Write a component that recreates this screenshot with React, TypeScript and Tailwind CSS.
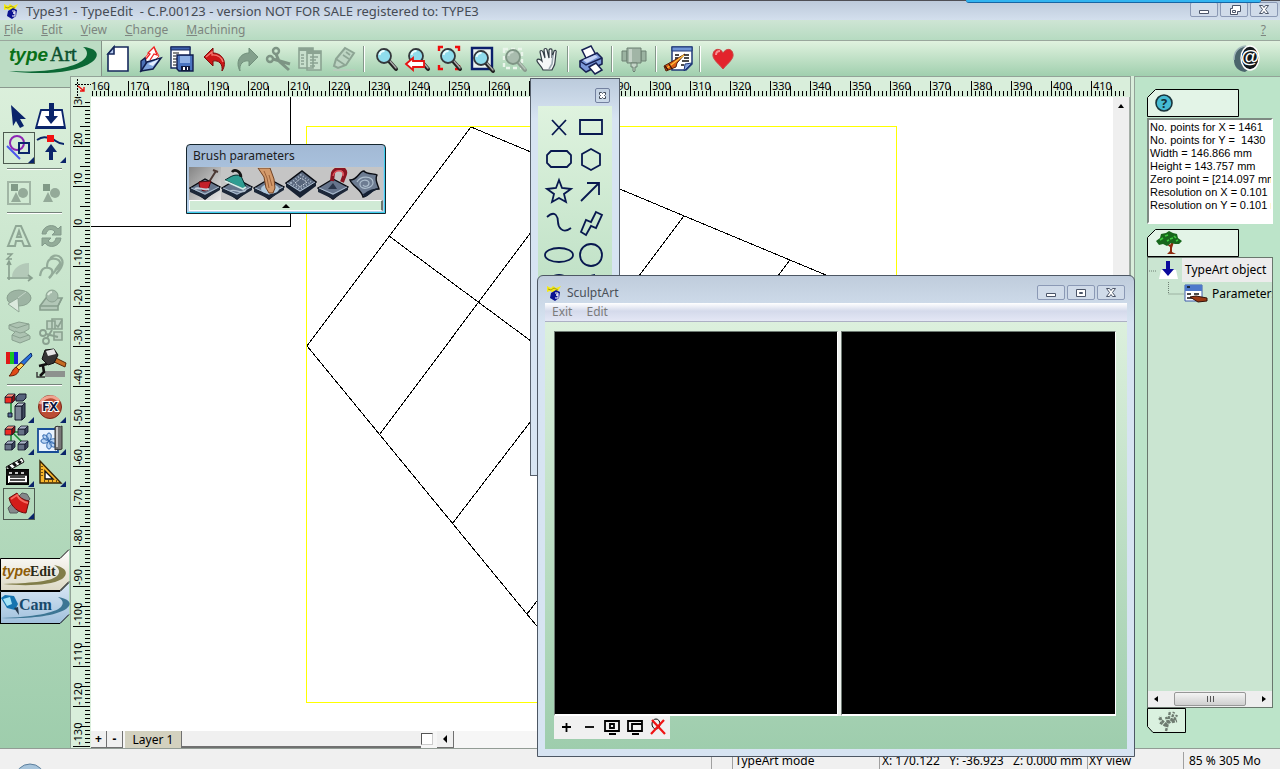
import React, { useState } from 'react';

// Types
interface IconProps {
  children: React.ReactNode;
  className?: string;
}

interface ToolProps {
  label: string;
  icon: React.ReactNode;
  active?: boolean;
  more?: boolean;
}

// Constants
const UNIT = 4.012; // pixels per millimetre on the rulers

const INFO_LINES = [
  'No. points for X = 1461',
  'No. points for Y =  1430',
  'Width = 146.866 mm',
  'Height = 143.757 mm',
  'Zero point = [214.097 mm',
  'Resolution on X = 0.101 mm',
  'Resolution on Y = 0.101 mm'
];

const MENUS = ['File', 'Edit', 'View', 'Change', 'Machining'];

const Icon: React.FC<IconProps> = ({ children, className = 'h-8 w-8' }) => (
  <svg viewBox="0 0 32 32" className={`block shrink-0 ${className}`} fill="none" aria-hidden="true">
    {children}
  </svg>
);

const Magnifier = ({ gray = false }: { gray?: boolean }) => (
  <>
    <path d="M19 18l7 8" stroke={gray ? '#8a9a8e' : '#222'} strokeWidth="4" strokeLinecap="round" />
    <path d="M20 18l6 7" stroke={gray ? '#b5c4b8' : '#aaa'} strokeWidth="1.5" strokeLinecap="round" />
    <circle cx="14" cy="13" r="7" fill={gray ? '#a9bcae' : '#8fdcec'} stroke={gray ? '#7e9484' : '#34383c'} strokeWidth="1.8" />
    <path d="M9.5 12a5 5 0 0 1 5-4" stroke={gray ? '#cddbd0' : '#e9fdff'} strokeWidth="2" />
  </>
);

// Toolbar icons
const NewIcon = () => (
  <Icon>
    <path d="M12 4h14v24H6V11z" fill="#fff" stroke="#16295c" strokeWidth="1.6" />
    <path d="M12 4v7H6z" fill="#b8cdf0" stroke="#16295c" strokeWidth="1.6" />
  </Icon>
);

const OpenIcon = () => (
  <Icon>
    <path d="M9 17L20 4l5 9-10 11z" fill="#fff" stroke="#e33" strokeWidth="1" />
    <path d="M12 16l4-5-2-1 6-6 3 8-3-1-4 6" fill="#fff" stroke="#e22" strokeWidth="1.3" />
    <path d="M7 28V18l4-3 2 7z" fill="#4a6fb5" stroke="#101c4c" strokeWidth="1.4" />
    <path d="M7 28l6-9 14-4-8 11z" fill="#7ea3dd" stroke="#101c4c" strokeWidth="1.5" />
    <path d="M14 21l11-5-6 7z" fill="#e4eeff" />
  </Icon>
);

const SaveIcon = () => (
  <Icon>
    <path d="M5 4h19v21H5z" fill="#fff" stroke="#16295c" strokeWidth="1.4" />
    <path d="M5 4h19v3H5z" fill="#3e62ae" stroke="#16295c" />
    <path d="M7 10h6M7 13h3M7 16h4M7 19h3M7 22h4" stroke="#111" />
    <path d="M11 12h16v16H13l-2-2z" fill="#4a74c0" stroke="#101c4c" strokeWidth="1.4" />
    <path d="M14 13h10v7H14z" fill="#8fb0e4" />
    <path d="M15 23h9v5h-9z" fill="#111a3c" />
    <path d="M17 24h2v3h-2zM21 24h1v3h-1z" fill="#fff" />
  </Icon>
);

const UndoIcon = () => (
  <Icon>
    <path d="M6 14l9-9v5c9 0 15 9 9 18 1-7-3-11-9-10v5z" fill="#cc1717" stroke="#7d0b0b" />
    <path d="M8 14l6-5v3c6-.5 10 3 11 7" stroke="#f47b70" strokeWidth="1.3" />
  </Icon>
);

const RedoIcon = () => (
  <Icon>
    <path d="M28 14l-9-9v5c-9 0-14 9-9 18-1-7 3-11 9-10v5z" fill="#83a08c" stroke="#71907b" />
  </Icon>
);

const CutIcon = () => (
  <Icon>
    <circle cx="14" cy="8" r="3" stroke="#7d9484" strokeWidth="2.4" />
    <circle cx="8" cy="16" r="3" stroke="#7d9484" strokeWidth="2.4" />
    <path d="M14 11l3 7 10 9M11 16l17 5" stroke="#7d9484" strokeWidth="3" />
  </Icon>
);

const CopyIcon = () => (
  <Icon>
    <path d="M5 5h14v20H5zM13 8h14v19H13z" fill="#c8dfcd" stroke="#8ba392" strokeWidth="1.6" />
    <path d="M5 5h14v3H5zM13 8h14v3H13z" fill="#8ba392" />
    <path d="M7 12h3M7 15h3M7 18h3M7 21h3M16 14h8M16 17h6M16 20h8M16 23h5" stroke="#8ba392" strokeWidth="1.4" />
  </Icon>
);

const EraseIcon = () => (
  <Icon>
    <path d="M10 16L19 5l9 5-8 12-8 3-4-2z" fill="#bdd5c3" stroke="#8da594" strokeWidth="2" />
    <path d="M10 16l9 6M17 12l6 4M20 9l4 3" stroke="#8da594" strokeWidth="1.6" />
    <path d="M7 27h22" stroke="#b7cdbc" strokeWidth="2" />
  </Icon>
);

const ZoomIcon = () => <Icon><Magnifier /></Icon>;

const ZoomBackIcon = () => (
  <Icon>
    <Magnifier />
    <path d="M4 21l7-6v3h11v6H11v3z" fill="#fff" stroke="#e61212" strokeWidth="1.8" />
  </Icon>
);

const ZoomFitIcon = () => (
  <Icon>
    <path d="M5 8V4h4M21 4h4v4M5 22v4h4M25 22v4h-4" stroke="#f00c0c" strokeWidth="2.4" />
    <Magnifier />
  </Icon>
);

const ZoomBoxIcon = () => (
  <Icon>
    <path d="M6 5h20v21H6z" fill="#e9f2ee" stroke="#0b1f6b" strokeWidth="2.4" />
    <g transform="translate(1 2)"><Magnifier /></g>
  </Icon>
);

const ZoomSelIcon = () => (
  <Icon>
    <path d="M6 6h18v19H6z" stroke="#eaf5eb" strokeWidth="2.4" strokeDasharray="4 3" />
    <g transform="translate(1 1)"><Magnifier gray /></g>
  </Icon>
);

const HandIcon = () => (
  <Icon>
    <g transform="translate(2 0)">
      <path d="M11 27c-2-5-7-8-6-10s4 0 5 1L8 9c0-2 2-2 3 0l2 6-1-8c0-2 3-2 3 0l2 8V7c1-2 3-1 3 0v8l2-7c1-1 3-1 2 2l-1 9c0 4-2 5-3 8z" fill="#f5f8f8" stroke="#333d46" strokeWidth="1.2" />
      <path d="M21 12l-1 9-3 5" stroke="#9daab2" strokeWidth="1.6" />
    </g>
  </Icon>
);

const PrintIcon = () => (
  <Icon>
    <path d="M8 7l9-4 5 9-9 5z" fill="#fff" stroke="#172153" strokeWidth="1.5" />
    <path d="M6 18l17-8 5 5v6l-16 8-6-5z" fill="#7a97d8" stroke="#172153" strokeWidth="1.6" />
    <path d="M6 18l6 4 16-7" stroke="#172153" strokeWidth="1.4" />
    <path d="M9 17l12-5 3 2-11 6z" fill="#c6d5f6" />
    <path d="M15 24l7-4 6 7-7 4z" fill="#fff" stroke="#172153" strokeWidth="1.5" />
  </Icon>
);

const SpindleIcon = () => (
  <Icon>
    <path d="M4 8h5v10H4zM23 8h5v10h-5z" fill="#9bb3a1" stroke="#6c8072" />
    <path d="M9 5h14v15H9z" fill="#a1b5a6" stroke="#6c8072" />
    <path d="M11 6h3v13h-3z" fill="#c5d3c8" />
    <path d="M13 20h6v4h-2v4l-1 1-1-1v-4h-2z" fill="#c4d5c8" stroke="#6c8072" />
  </Icon>
);

const ReportIcon = () => (
  <Icon>
    <path d="M10 4h20v17l-6 6H10z" fill="#fff" stroke="#213978" strokeWidth="1.5" />
    <path d="M10 4h20v4H10z" fill="#6f94d6" stroke="#213978" />
    <path d="M13 12h4M13 15h3M22 12h5M22 15h5M20 18h7M19 22h3" stroke="#111" strokeWidth="1.3" />
    <path d="M30 20l-7 1-1 7z" fill="#88a6dd" stroke="#213978" />
    <path d="M23 11L11 18l-9 5 2 5 10-4 1-4z" fill="#dc5c13" stroke="#50200b" />
    <path d="M22 12l-9 7-8 6" stroke="#ffc33f" strokeWidth="1.2" />
    <path d="M7 21l3 5M3 23l3 4" stroke="#3d1408" strokeWidth="1.4" />
  </Icon>
);

const HeartIcon = () => (
  <Icon>
    <path d="M17 26C12 20 6 16 7 11c1-6 8-6 10-1 3-5 9-5 10 1 1 5-5 9-10 15z" fill="#e3242c" stroke="#c44" />
    <path d="M10 12c0-3 2-4 4-4" stroke="#f79294" strokeWidth="2" />
  </Icon>
);

// Drawing tools
const PointerIcon = () => (
  <Icon><path d="M8 5l15 14-6 0 4 7-4 2-4-7-3 5z" fill="#0a246a" /></Icon>
);

const PressIcon = () => (
  <Icon>
    <path d="M6 10h21l3 18H1z" fill="#fff" stroke="#0a246a" strokeWidth="1.8" />
    <path d="M1 27h29" stroke="#0a246a" strokeWidth="2" />
    <path d="M14 3h5v13h4l-7 8-6-8h4z" fill="#0a246a" />
  </Icon>
);

const ShapesIcon = () => (
  <Icon>
    <circle cx="14" cy="11" r="7" stroke="#8d25b4" strokeWidth="2" />
    <path d="M16 11h10v10H16z" stroke="#0a246a" strokeWidth="2" />
    <path d="M4 14l13 13" stroke="#4a55ee" strokeWidth="2" />
  </Icon>
);

const NodeIcon = () => (
  <Icon>
    <path d="M2 8c7-5 11-2 15-1s5 5 12 5" stroke="#0a246a" strokeWidth="2" />
    <path d="M12 3h7v7h-7z" fill="#f31212" />
    <path d="M16 12l6 8h-4v8h-4v-8h-4z" fill="#0a246a" />
  </Icon>
);

const GroupIcon = ({ framed = false }: { framed?: boolean }) => (
  <Icon>
    {framed && <path d="M5 6h22v22H5z" stroke="#a1b6a5" strokeWidth="2" />}
    <path d="M8 8h7v7H8z" fill="#819a87" />
    <circle cx="20" cy="17" r="5" fill="#94aa99" />
    <path d="M13 16l5 10H8z" fill="#94aa99" />
  </Icon>
);

const LetterIcon = () => (
  <Icon>
    <path d="M5 26l8-20h5l9 20h-6l-2-5h-6l-1 5zM14 17h4l-2-6z" stroke="#8fa795" strokeWidth="2" />
  </Icon>
);

const CycleIcon = () => (
  <Icon>
    <path d="M7 14c1-9 12-11 16-5l3-3v9h-9l3-3c-3-4-8-3-9 2z" fill="#93ac99" stroke="#82998a" />
    <path d="M26 18c-1 9-12 11-16 5l-3 3v-8h9l-3 3c3 3 7 2 8-3z" fill="#93ac99" stroke="#82998a" />
  </Icon>
);

const ProfileIcon = () => (
  <Icon>
    <path d="M9 25c0-8 8-14 17-14v14z" fill="#b3c9b8" />
    <path d="M6 28V10M4 13l2-4 2 4M4 26h24M25 23l4 3-4 3" stroke="#889f8e" strokeWidth="1.6" />
    <path d="M4 2h5L4 7h5" stroke="#889f8e" strokeWidth="1.4" />
  </Icon>
);

const TubeIcon = () => (
  <Icon>
    <path d="M5 24c1-7 4-9 9-8s4 7 0 10M12 15c0-8 4-9 9-8s6 7 0 11M15 8c1-5 8-6 11-2s1 10-5 16" stroke="#93ab99" strokeWidth="2.2" />
    <path d="M14 26l7-8M20 18l6-8" stroke="#93ab99" strokeWidth="2" />
  </Icon>
);

const RevolveIcon = () => (
  <Icon>
    <ellipse cx="16" cy="14" rx="12" ry="8" fill="#9db4a3" stroke="#8aa190" />
    <path d="M15 14l-10 6 11 8z" fill="#dbe9dd" stroke="#92a998" />
    <path d="M15 14l8-6" stroke="#c4d5c8" />
  </Icon>
);

const EmbossIcon = () => (
  <Icon>
    <path d="M5 22l6-8h16l-4 8v4H5z" fill="#b2c7b7" stroke="#879e8d" strokeWidth="1.6" />
    <path d="M5 22h18l4-8" stroke="#879e8d" strokeWidth="1.4" />
    <circle cx="17" cy="12" r="6" fill="#a6bcac" stroke="#8ba291" />
    <path d="M13 11c1-2 2-3 4-3" stroke="#dcebdd" strokeWidth="2" />
  </Icon>
);

const LoftIcon = () => (
  <Icon>
    <path d="M6 9l10-3 10 2v5l-5 3 6 4v3l-10 4-8-3v-5l3-3-6-3z" fill="#adc3b2" stroke="#8aa190" />
    <path d="M6 9l8 3 12-4M9 19l8 3 9-3M12 15l5 2 4-1" stroke="#8aa190" />
  </Icon>
);

const TrimIcon = () => (
  <Icon>
    <path d="M12 5h8v8h-8zM17 3h10v10H17zM19 16h8v8h-8z" fill="#bed4c3" stroke="#8aa190" strokeWidth="1.6" />
    <path d="M21 9l2 2 4-7" stroke="#8aa190" strokeWidth="1.6" />
    <circle cx="8" cy="17" r="3" stroke="#8aa190" strokeWidth="1.8" />
    <circle cx="11" cy="25" r="3" stroke="#8aa190" strokeWidth="1.8" />
    <path d="M11 18l12 3M12 22l5-8" stroke="#8aa190" strokeWidth="2" />
  </Icon>
);

const PaintIcon = () => (
  <Icon>
    <path d="M3 4h4v12H3z" fill="#e01818" />
    <path d="M7 4h4v12H7z" fill="#19c425" />
    <path d="M11 4h4v12h-4z" fill="#1a22d8" />
    <path d="M28 5l1 3-12 13-3-3z" fill="#2871dc" stroke="#0b296b" />
    <path d="M18 15l3 2-5 5-3-3z" fill="#ffd255" stroke="#6d3909" />
    <path d="M13 19l3 3c-1 4-4 6-10 6 3-2 3-7 7-9z" fill="#e04a16" stroke="#6d1f09" />
  </Icon>
);

const HammerIcon = () => (
  <Icon>
    <path d="M10 23h20v6H10z" fill="#8d928e" />
    <path d="M2 24v5h8" stroke="#333" strokeWidth="1.4" />
    <path d="M19 9l12 6-1 4-13-6z" fill="#c56b22" stroke="#5b2809" />
    <path d="M10 2l9-1 4 6-4 8-6 2-6-6z" fill="#343434" stroke="#111" />
    <path d="M11 3l8-2 2 5-8 2z" fill="#e6e6e6" />
    <path d="M4 18l8-2M8 18l1 6-4 4" stroke="#111" strokeWidth="2.600" />
  </Icon>
);

const Cube = ({ x, y, red = false }: { x: number; y: number; red?: boolean }) => (
  <g transform={`translate(${x} ${y})`} stroke="#14182c" strokeWidth="0.8">
    <path d="M0 3h7v6H0z" fill={red ? '#ee2a22' : '#667286'} />
    <path d="M0 3l3-3h7L7 3z" fill={red ? '#ff8a78' : '#aab5c8'} />
    <path d="M7 3l3-3v6L7 9z" fill={red ? '#8e1010' : '#39435b'} />
  </g>
);

const SceneIcon = () => (
  <Icon>
    <path d="M8 9v13M10 7h6" stroke="#1a8c30" strokeWidth="1.5" />
    <Cube x={2} y={2} red />
    <path d="M13 5l3-3h7v4l-3 3h-7z" fill="#56637c" stroke="#14182c" />
    <path d="M12 14h7v14h-7z" fill="#7a8595" stroke="#14182c" />
    <path d="M12 14l3-3h7l-3 3z" fill="#c0c9d5" stroke="#14182c" />
    <path d="M19 14l3-3v14l-3 3z" fill="#414b5e" stroke="#14182c" />
    <path d="M5 21h4v4H5z" fill="#526a97" stroke="#14182c" />
  </Icon>
);

const FxIcon = () => (
  <Icon>
    <circle cx="15" cy="15" r="11.5" fill="#bb4d35" stroke="#7c2415" />
    <path d="M5 12a11 11 0 0 1 19-3" stroke="#f0a591" strokeWidth="3" />
    <text x="15" y="19" textAnchor="middle" className="font-['Noto_Sans'] text-[13px] font-bold" fill="#0b1440" stroke="#fff" strokeWidth="2" paintOrder="stroke">FX</text>
  </Icon>
);

const CubesIcon = () => (
  <Icon>
    <path d="M8 9v10M10 9l10 10M10 8h9" stroke="#1a8c30" strokeWidth="1.5" />
    <Cube x={2} y={2} red />
    <Cube x={15} y={2} />
    <Cube x={2} y={17} />
    <Cube x={15} y={17} />
  </Icon>
);

const PatternIcon = () => (
  <Icon>
    <path d="M3 5h20v23H3z" fill="#e9f3ff" stroke="#174b96" strokeWidth="1.8" />
    <path d="M14 9c-3 0-3 6 0 8 3-2 3-8 0-8zM14 25c-3 0-3-6 0-8 3 2 3 8 0 8zM6 17c0-3 6-3 8 0-2 3-8 3-8 0zM22 17c0-3-6-3-8 0 2 3 8 3 8 0zM8 11c-1 3 3 6 6 6 0-3-3-7-6-6zM20 23c1-3-3-6-6-6 0 3 3 7 6 6z" fill="#b9d5f6" stroke="#2f66ad" />
    <path d="M20 3c3-2 5 1 7-1v23c-3 2-4-1-7 1z" fill="#777" stroke="#333" />
    <path d="M22 3v20" stroke="#ddd" strokeWidth="1.6" />
  </Icon>
);

const ClapperIcon = () => (
  <Icon>
    <path d="M3 11L19 2l2 4L5 15z" fill="#fff" stroke="#111" />
    <path d="M5 10l3 3M10 7l3 3M15 5l3 2" stroke="#111" strokeWidth="3" />
    <path d="M4 14h21v14H4z" fill="#fff" stroke="#000" strokeWidth="2" />
    <path d="M4 15h21v4H4zM7 21h15M7 24h15M6 27h18" fill="#111" stroke="#111" strokeWidth="1.6" />
    <path d="M6 17h3M12 17h3M18 17h3" stroke="#fff" strokeWidth="1.6" />
  </Icon>
);

const RulerIcon = () => (
  <Icon>
    <path d="M5 5l21 22H5z" fill="#f8b62c" stroke="#3a2505" strokeWidth="1.4" />
    <path d="M10 15l8 8h-8z" fill="#fff" stroke="#111" strokeWidth="1.4" />
    <path d="M7 10v1M7 13v1M7 16v1M7 19v1M9 25h1M13 25h1M17 25h1M21 25h1" stroke="#442a05" strokeWidth="1.4" />
  </Icon>
);

const EraserIcon = () => (
  <Icon>
    <path d="M5 20L19 5l5 1 3 5-13 14-7 0z" fill="#84898b" stroke="#565b5c" />
    <path d="M6 10l8-5c2 4 6 7 12 8l-3 12c-7 0-15-6-17-15z" fill="#d31c19" stroke="#690c0b" />
    <path d="M8 11l6-4c2 4 6 7 11 8" stroke="#f46a60" strokeWidth="1.8" />
  </Icon>
);

// Brush icons share a stone slab
const Slab = ({ children }: { children?: React.ReactNode }) => (
  <>
    <path d="M1 20l15-9 15 8-15 12z" fill="#66758c" stroke="#080b12" strokeWidth="1.4" />
    <path d="M1 20l15 7 15-8v3L16 31 1 24z" fill="#1d2839" />
    <path d="M2 20l14 6 14-7" stroke="#adbfd1" />
    {children}
  </>
);

const BRUSHES = [
  {
    label: 'Add material',
    art: <Slab><path d="M20 14l7-11M24 2l5 2" stroke="#4b3934" strokeWidth="2" /><path d="M10 14l12-1-3 9c-4 2-9 1-9-8z" fill="#c4202a" stroke="#4f090e" /><path d="M6 21c3-3 8 2 14 0" stroke="#c3cedb" strokeWidth="2" /></Slab>
  },
  {
    label: 'Smooth',
    art: <Slab><path d="M4 12c4-2 9-7 16-4l5 11-3 2z" fill="#2f9d92" stroke="#082c2e" /><path d="M4 13l18 8 3-2" stroke="#d5eee9" strokeWidth="1.6" /><path d="M11 4c3-4 9 0 9 5" stroke="#151515" strokeWidth="2.6" /><path d="M9 23c5-3 12 4 16-1" stroke="#b1bfce" strokeWidth="1.4" /></Slab>
  },
  {
    label: 'Stamp',
    art: <Slab><ellipse cx="17" cy="21" rx="9" ry="5" fill="#b1c9dc" /><path d="M5 0h12l4 11 1 9-2 5h-4l-3-5-2-11z" fill="#d39a6b" stroke="#704122" /><path d="M11 3l3 7 2 10M16 7l3 11" stroke="#9b6039" /></Slab>
  },
  {
    label: 'Texture',
    art: <><path d="M1 15L17 3l14 11-16 13z" fill="#59677d" stroke="#080b12" strokeWidth="1.5" /><path d="M1 15l14 9 16-10v4L15 30 1 19z" fill="#172233" /><path d="M6 15l10-8 10 7-11 7z" stroke="#a7b6c8" strokeWidth="2" strokeDasharray="1 2" /><path d="M10 15l6-5 6 4-7 5z" stroke="#d1dbe5" strokeDasharray="2 1" /><path d="M2 15l13 8 15-9" stroke="#adbfd1" /></>
  },
  {
    label: 'Attract',
    art: <Slab><path d="M15 13l1-8c2-6 14-6 12 1l-3 8" stroke="#8b1522" strokeWidth="4" /><path d="M16 8c1-7 12-7 10 0" stroke="#df515a" strokeWidth="1.5" /><path d="M11 21l5-6 4 6z" fill="#29364a" /></Slab>
  },
  {
    label: 'Distort',
    art: <><path d="M1 12c8 0 9-9 14-9 3 4 11 2 13 4-3 5 2 12 2 14-8-1-11 8-16 8C13 22 3 18 1 12z" fill="#6d7c92" stroke="#080b12" strokeWidth="1.4" /><path d="M8 14c4-7 15-6 16 0s-12 9-13 3 9-6 9-2-5 4-6 2" stroke="#aebfce" strokeWidth="1.2" /><path d="M14 26c4-1 6-6 16-5-7 1-10 8-15 8" fill="#142033" /></>
  }
];

const SHAPES = [
  { label: 'Point', art: <path d="M9 9l14 15M23 9L9 24" /> },
  { label: 'Rectangle', art: <path d="M5 9h22v14H5z" /> },
  { label: 'Rounded rectangle', art: <path d="M8 8h16l4 4v8l-4 4H8l-4-4v-8z" /> },
  { label: 'Polygon', art: <path d="M16 6l9 5v11l-9 5-9-5V11z" /> },
  { label: 'Star', art: <path d="M16 5l3 8 9 1-7 5 2 8-7-4-7 4 2-8-7-5 9-1z" /> },
  { label: 'Line', art: <path d="M6 26L23 9M12 8h12v12" /> },
  { label: 'Curve', art: <path d="M4 10c9-8 11 1 11 5s4 13 13 6" /> },
  { label: 'Path', art: <path d="M21 5l6 3-6 13-5-2-5 9-5-3 5-12 5 2z" /> },
  { label: 'Ellipse', art: <ellipse cx="16" cy="16" rx="14" ry="7" /> },
  { label: 'Circle', art: <circle cx="16" cy="16" r="11" /> },
  { label: 'Ring', art: <circle cx="16" cy="15" r="11" /> },
  { label: 'Arc', art: <path d="M6 24c0-12 5-19 14-20" /> }
];

const TOOLBAR: ToolProps[][] = [
  [
    { label: 'New', icon: <NewIcon /> },
    { label: 'Open', icon: <OpenIcon /> },
    { label: 'Save', icon: <SaveIcon /> },
    { label: 'Undo', icon: <UndoIcon /> },
    { label: 'Redo', icon: <RedoIcon /> },
    { label: 'Cut', icon: <CutIcon /> },
    { label: 'Copy', icon: <CopyIcon /> },
    { label: 'Erase', icon: <EraseIcon /> }
  ],
  [
    { label: 'Zoom', icon: <ZoomIcon /> },
    { label: 'Previous zoom', icon: <ZoomBackIcon /> },
    { label: 'Zoom all', icon: <ZoomFitIcon /> },
    { label: 'Zoom page', icon: <ZoomBoxIcon /> },
    { label: 'Zoom selection', icon: <ZoomSelIcon /> },
    { label: 'Pan', icon: <HandIcon /> }
  ],
  [{ label: 'Print', icon: <PrintIcon /> }],
  [{ label: 'Machine', icon: <SpindleIcon /> }],
  [{ label: 'Report', icon: <ReportIcon /> }],
  [{ label: 'Favourite', icon: <HeartIcon /> }]
];

const SIDE_TOOLS: ToolProps[][] = [
  [
    { label: 'Select', icon: <PointerIcon /> },
    { label: 'Press', icon: <PressIcon /> },
    { label: 'Shapes', icon: <ShapesIcon />, active: true, more: true },
    { label: 'Edit points', icon: <NodeIcon />, more: true }
  ],
  [
    { label: 'Group', icon: <GroupIcon framed /> },
    { label: 'Ungroup', icon: <GroupIcon /> }
  ],
  [
    { label: 'Text', icon: <LetterIcon /> },
    { label: 'Convert', icon: <CycleIcon /> },
    { label: 'Profile', icon: <ProfileIcon /> },
    { label: 'Tube', icon: <TubeIcon /> },
    { label: 'Revolve', icon: <RevolveIcon /> },
    { label: 'Emboss', icon: <EmbossIcon /> },
    { label: 'Loft', icon: <LoftIcon /> },
    { label: 'Trim', icon: <TrimIcon /> },
    { label: 'Paint', icon: <PaintIcon /> },
    { label: 'Hammer', icon: <HammerIcon /> }
  ],
  [
    { label: 'Scene', icon: <SceneIcon />, more: true },
    { label: 'Effects', icon: <FxIcon />, more: true },
    { label: 'Objects', icon: <CubesIcon />, more: true },
    { label: 'Pattern', icon: <PatternIcon />, more: true },
    { label: 'Animation', icon: <ClapperIcon />, more: true },
    { label: 'Measure', icon: <RulerIcon />, more: true },
    { label: 'Eraser', icon: <EraserIcon />, active: true, more: true }
  ]
];

const SideTool: React.FC<ToolProps> = ({ label, icon, active = false, more = false }) => (
  <button aria-label={label} title={label} className={`relative h-8 w-8 ${active ? 'outline outline-1 -outline-offset-1 outline-[#4d5a50]' : ''}`}>
    {icon}
    {more && (
      <svg viewBox="0 0 6 6" className="absolute right-px bottom-px h-[6px] w-[6px]" aria-hidden="true">
        <path d="M6 0v6H0z" fill="#0a246a" />
      </svg>
    )}
  </button>
);

// Window caption buttons
const CAPTION_ART = {
  min: <path d="M8.5 7.5h9v3h-9z" />,
  max: <path d="M8.5 3.5h9v7h-9zM11.5 6.5h3v1h-3z" />,
  restore: <path d="M11.5 2.5h8v6h-3v3h-7v-6h2zM11.5 7.5h3v2h-3z" />,
  close: <path d="M8.5 2.5h3l1.5 2 1.5-2h3l-3 4 3 4h-3l-1.5-2-1.5 2h-3l3-4z" />
};

const CaptionButton = ({ kind, label }: { kind: keyof typeof CAPTION_ART; label: string }) => (
  <button aria-label={label} className="h-[15px] w-7 rounded-[2px] border border-[#8b99b5] bg-[#d0dbe9]">
    <svg viewBox="0 0 26 13" className="h-[13px] w-[26px]" fill="#fff" stroke="#4b5568" aria-hidden="true">
      {CAPTION_ART[kind]}
    </svg>
  </button>
);

const AppBadge = () => (
  <svg viewBox="0 0 16 16" className="h-4 w-4 shrink-0" aria-hidden="true">
    <path d="M0 1l4 2 2-2 3 2 5-2-3 5-4 2-4-2-3 1z" fill="#f4ea18" />
    <path d="M1 4l3 1 3-2 4 2" fill="none" stroke="#6e6a10" strokeWidth="0.600" />
    <path d="M4 8l5-3 4 2-1 6-4 3-5-3z" fill="#0c1290" />
    <path d="M8 8h3v2H9h2v3H8" fill="none" stroke="#fff" />
  </svg>
);

// Rulers
const TopRuler = () => {
  const ticks: number[] = [];
  for (let v = 161; v <= 418; v++) ticks.push(v);
  const px = (v: number) => Math.round(37 + (v - 170) * UNIT);

  return (
    <svg className="block h-full w-full" shapeRendering="crispEdges" aria-hidden="true">
      {ticks.map((v) => (
        <path key={v} d={`M${px(v)}.5 19V${v % 10 === 0 ? 4 : v % 5 === 0 ? 9 : 14}`} stroke="#000" />
      ))}
      {ticks.filter((v) => v % 10 === 0).map((v) => (
        <text key={v} x={px(v) + 2} y="13" className="font-['Noto_Sans'] text-[11px]">{v}</text>
      ))}
      <text x="0" y="13" className="font-['Noto_Sans'] text-[11px]">160</text>
    </svg>
  );
};

const LeftRuler = () => {
  const ticks: number[] = [];
  for (let v = 31; v >= -130; v--) ticks.push(v);
  const py = (v: number) => Math.round(129 - v * 4);

  return (
    <svg className="block h-full w-full" shapeRendering="crispEdges" aria-hidden="true">
      {ticks.map((v) => (
        <path key={v} d={`M17 ${py(v)}.5H${v % 10 === 0 ? 0 : v % 5 === 0 ? 7 : 12}`} stroke="#000" />
      ))}
      {ticks.filter((v) => v % 10 === 0).map((v) => (
        <text key={v} transform={`translate(9 ${py(v) - 1}) rotate(-90)`} className="font-['Noto_Sans'] text-[11px]">{v}</text>
      ))}
    </svg>
  );
};

const Drawing = () => (
  <svg className="absolute inset-0 h-full w-full" fill="none" stroke="#000" shapeRendering="crispEdges" aria-label="Drawing">
    <path d="M199.5 0V129.5H0" />
    <path d="M215.5 29.5h590v576h-590z" stroke="#ffff00" />
    <path d="M380 30L216 249l320 390M380 30l356 148.5 120 50" />
    <path d="M298 139l200 148M289 337L443 131M361 427l82-107M436 517l62-82" />
    <path d="M593 119l-60 80M699 163l-30 40" />
  </svg>
);

const BrandTab = ({ name }: { name: 'edit' | 'cam' }) => (
  <svg viewBox="0 0 70 42" className="block h-[42px] w-[70px]" aria-hidden="true">
    <defs>
      <linearGradient id={`tab-${name}`} x1="0" y1="0" x2="0" y2="1">
        <stop offset="0" stopColor={name === 'edit' ? '#fff' : '#dbe9f6'} />
        <stop offset="1" stopColor={name === 'edit' ? '#dcd8c4' : '#a0c0dc'} />
      </linearGradient>
    </defs>
    <path d="M0 9h60l9-9v33l-9 9H0z" fill={`url(#tab-${name})`} />
    <path d="M.5 42V9.5H60L69 .5M0 41.5h60l9-9" fill="none" stroke="#000" />
    {name === 'edit' ? (
      <>
        <path d="M54 16c11 2 16 8 8 14-12 7-39 7-59 5 25-1 47-2 54-8 4-4 2-8-3-11z" fill="#817d49" />
        <text x="2" y="27" className="font-['Liberation_Sans'] text-[14px] font-bold italic" fill="#8d5c08">type</text>
        <text x="30" y="27" className="font-['Liberation_Serif'] text-[14px] font-bold" fill="#292915">Edit</text>
      </>
    ) : (
      <>
        <path d="M58 15c12 2 15 7 8 12-12 8-43 10-65 9 32-1 54-5 60-11 3-4 2-7-3-10z" fill="#3d7694" />
        <path d="M1 16l4-3 9 1 4 8-3 6-8-2z" fill="#1674b0" />
        <path d="M3 17l7-2 2 7-5 2z" fill="#a5e3f7" />
        <path d="M14 26l4-1 1 8z" fill="#26394d" />
        <text x="19" y="28" className="font-['Liberation_Serif'] text-[16px] font-bold" fill="#17496c">Cam</text>
      </>
    )}
  </svg>
);

const PanelTab = ({ children }: { children: React.ReactNode }) => (
  <div className="relative h-7 w-[92px]">
    <svg viewBox="0 0 92 28" className="absolute inset-0 h-7 w-[92px]" aria-hidden="true">
      <path d="M8.5 .5h83v27H.5v-19z" fill="#e3f4e7" stroke="#000" />
    </svg>
    <div className="relative pl-2 pt-[5px]">{children}</div>
  </div>
);

const InfoPanel = () => (
  <aside className="ml-[3px] flex w-[146px] shrink-0 flex-col border-t border-l border-[#93a398] bg-[#bce4c9] pt-3 pr-[7px] pl-3">
    <PanelTab>
      <svg viewBox="0 0 18 18" className="h-[18px] w-[18px]" role="img" aria-label="Help">
        <circle cx="9" cy="9" r="8" fill="#46bbd3" stroke="#19343b" strokeWidth="1.6" />
        <text x="9" y="14" textAnchor="middle" className="font-['Noto_Sans'] text-[13px] font-bold" fill="#11313a">?</text>
      </svg>
    </PanelTab>
    <div className="mt-px h-[106px] overflow-hidden border-2 border-t-[#7d8a82] border-r-white border-b-white border-l-[#7d8a82] bg-white pt-px pl-px font-['Liberation_Sans',sans-serif] text-[11px] leading-[13px] whitespace-pre">
      {INFO_LINES.map((line) => (
        <p key={line}>{line}</p>
      ))}
    </div>
    <div className="mt-[5px]">
      <PanelTab>
        <svg viewBox="0 0 28 24" className="-mt-1 h-6 w-7" aria-hidden="true">
          <path d="M12 12l3 3 3-5 1 2-2 6v4l4 2h-9l3-3v-4l-5-4z" fill="#8d2a0d" />
          <path d="M1 11l4-3 1-4 5-1 3-2 4 2 4 1 1 4 4 3-3 3h-4l-4-1-4 3-4-2-4 1z" fill="#17671c" />
          <path d="M5 10l3-2M10 6l3-1M15 9l3-1M19 6l2 2M21 11l2-1M12 11l2-1" stroke="#3dcb3f" strokeWidth="1.6" />
        </svg>
      </PanelTab>
    </div>
    <div className="flex min-h-0 flex-1 flex-col border border-[#69776d] bg-[#cae5d1]">
      <ul className="flex-1 overflow-hidden text-[12px] leading-6 whitespace-nowrap">
        <li className="flex h-6 items-center">
          <svg viewBox="0 0 34 24" className="h-6 w-[34px] shrink-0" aria-hidden="true">
            <path d="M1 13h8" stroke="#6f8074" strokeDasharray="1 1" />
            <path d="M13 12h15l2 9H11z" fill="#fff" />
            <path d="M18 3h4v8h4l-6 7-6-7h4z" fill="#0a0a9c" />
          </svg>
          <span className="h-full flex-1 bg-[#ececec] pl-[3px]">TypeArt object</span>
        </li>
        <li className="flex h-6 items-center">
          <svg viewBox="0 0 60 24" className="h-6 w-[60px] shrink-0" aria-hidden="true">
            <path d="M20.5 0v12H36" stroke="#6f8074" fill="none" strokeDasharray="1 1" />
            <path d="M37 3h17v16H37z" fill="#fff" stroke="#3a5baa" />
            <path d="M37 3h17v6H37z" fill="#4e79cb" />
            <path d="M39 5h3M39 12h4M46 12h5M39 16h12" stroke="#111" strokeWidth="1.4" />
            <path d="M42 15l6-1 11 2v3l-9 1z" fill="#9a3a15" stroke="#32130a" />
          </svg>
          <span className="pl-1">Parameters</span>
        </li>
      </ul>
      <div className="flex h-4 items-center justify-between bg-[#eee]">
        <button aria-label="Scroll left" className="flex h-4 w-4 items-center justify-center">
          <svg viewBox="0 0 4 8" className="h-2 w-1" aria-hidden="true"><path d="M4 1v6L0 4z" /></svg>
        </button>
        <div className="flex h-[14px] w-[72px] items-center justify-center gap-[2px] rounded-[2px] border border-[#979797] bg-linear-to-b from-[#f4f4f4] to-[#cfcfcf]">
          <i className="h-[6px] w-px bg-[#555]" />
          <i className="h-[6px] w-px bg-[#555]" />
          <i className="h-[6px] w-px bg-[#555]" />
        </div>
        <button aria-label="Scroll right" className="flex h-4 w-4 items-center justify-center">
          <svg viewBox="0 0 4 8" className="h-2 w-1" aria-hidden="true"><path d="M0 1v6l4-3z" /></svg>
        </button>
      </div>
    </div>
    <button aria-label="Layers tree" className="mb-[15px] h-[25px] w-[39px]">
      <svg viewBox="0 0 39 25" className="h-[25px] w-[39px]" aria-hidden="true">
        <path d="M.5 .5h38v24H6l-5.5-6z" fill="#daf1df" stroke="#000" />
        <path d="M19 23l2-8 8-4M21 15l-2-6M24 13l3-9M20 17l-8-7M21 15l2-12M14 12l-1-4M27 12l3-5M19 18l-7-4M25 14l5-1" stroke="#6e7b70" strokeWidth="2.4" strokeDasharray="3 1" fill="none" />
      </svg>
    </button>
  </aside>
);

const ShapePalette = () => (
  <section className="absolute top-[78px] left-[530px] flex h-[398px] w-[90px] flex-col border border-[#57606c] bg-linear-to-b from-[#bccbdc] via-[#d7e4f2] via-10% to-[#d7e4f2] px-[7px] pb-[7px]">
    <header className="flex h-[27px] items-center justify-end pt-[6px] pr-[2px]">
      <button aria-label="Close palette" className="h-[15px] w-[15px] rounded-[2px] border border-[#73819f]">
        <svg viewBox="0 0 13 13" className="h-[13px] w-[13px]" fill="#fff" stroke="#3f4857" aria-hidden="true">
          <path d="M3.5 3.5h2l1 1 1-1h2v2l-1 1 1 1v2h-2l-1-1-1 1h-2v-2l1-1-1-1z" />
        </svg>
      </button>
    </header>
    <div className="flex-1 overflow-hidden bg-linear-to-b from-[#dff3df] to-[#a0cfae] pt-[5px] pl-[5px]">
      <div className="grid w-16 grid-cols-2">
        {SHAPES.map((shape) => (
          <button key={shape.label} aria-label={shape.label} className="h-8 w-8">
            <Icon><g stroke="#08184f" strokeWidth="1.8">{shape.art}</g></Icon>
          </button>
        ))}
      </div>
    </div>
  </section>
);

const BrushWindow = () => (
  <section className="absolute top-[144px] left-[186px] w-[200px] rounded-t-[4px] border border-[#15262e] bg-linear-to-b from-[#a2b9d5] to-[#b6d0eb] px-[2px] pb-[2px] shadow-[inset_-1px_-1px_0_#3fd0ee]">
    <h2 className="h-[22px] pl-1 text-[12px] leading-[22px] text-[#1c1c1c]">Brush parameters</h2>
    <div className="flex h-[33px] bg-[#c5c5c5]">
      {BRUSHES.map((brush, index) => (
        <button key={brush.label} aria-label={brush.label} className={`h-[33px] w-8 ${index === 0 ? 'bg-linear-to-br from-[#858585] to-[#e8e8e8]' : ''}`}>
          <Icon>{brush.art}</Icon>
        </button>
      ))}
    </div>
    <div className="flex h-[11px] items-center justify-center border border-r-2 border-white border-r-[#6d776f] bg-[#d0ead5]">
      <svg viewBox="0 0 8 4" className="h-1 w-2" aria-hidden="true"><path d="M0 4l4-4 4 4z" /></svg>
    </div>
  </section>
);

const VIEW_TOOLS = [
  { label: 'Zoom in', art: <path d="M7 11h9M11.5 7v9" /> },
  { label: 'Zoom out', art: <path d="M7 11h9" /> },
  { label: 'Fit view', art: <path d="M4 5h14v10H4zM8 18h7M9 8h4v4H9z" /> },
  { label: 'Window view', art: <path d="M4 5h14v10H4zM8 18h7M8 15V8h10" /> }
];

const SculptWindow = () => (
  <section className="absolute top-[275px] left-[537px] flex h-[482px] w-[598px] flex-col rounded-t-[6px] border border-[#4d5764] bg-linear-to-b from-[#bfccdc] via-[#d7e4f2] via-10% to-[#d7e4f2] px-[7px] pb-[7px]">
    <header className="flex h-[27px] items-center gap-1 pt-[6px] pl-[2px]">
      <AppBadge />
      <h2 className="flex-1 text-[12px] text-[#4a5058]">SculptArt</h2>
      <div className="flex gap-[2px] pr-[2px]">
        <CaptionButton kind="min" label="Minimize SculptArt" />
        <CaptionButton kind="max" label="Maximize SculptArt" />
        <CaptionButton kind="close" label="Close SculptArt" />
      </div>
    </header>
    <nav className="flex h-[19px] items-center gap-[14px] border-b border-[#acb0c4] bg-linear-to-b from-white via-[#d4daeb] via-45% to-[#e4e7f5] pl-[7px] text-[12px] leading-[18px] text-[#7b7b7b]">
      <button>Exit</button>
      <button>Edit</button>
    </nav>
    <div className="flex flex-1 flex-col bg-linear-to-b from-[#dcf0dd] to-[#9ecdad] px-[9px] pt-[9px] pb-[10px]">
      <div className="mr-[2px] flex min-h-0 flex-1 gap-[3px] bg-[#eef2ee]">
        <div className="flex-[284] border-t border-r border-b-2 border-l border-t-[#6e7a73] border-r-white border-b-white border-l-[#6e7a73] bg-black" />
        <div className="flex-[275] border-t border-r border-b-2 border-l border-t-[#6e7a73] border-r-white border-b-white border-l-[#6e7a73] bg-black" />
      </div>
      <div className="flex h-[23px] w-[116px] bg-[#f0f0f0] pl-px">
        {VIEW_TOOLS.map((tool) => (
          <button key={tool.label} aria-label={tool.label} className="h-[23px] w-[23px]">
            <svg viewBox="0 0 23 23" className="h-[23px] w-[23px]" fill="none" stroke="#000" strokeWidth="1.8" aria-hidden="true">{tool.art}</svg>
          </button>
        ))}
        <button aria-label="Reset view" className="h-[23px] w-[23px]">
          <svg viewBox="0 0 23 23" className="h-[23px] w-[23px]" fill="none" aria-hidden="true">
            <ellipse cx="9" cy="8" rx="4" ry="5" stroke="#000" />
            <path d="M4 18L17 4M5 4l13 14" stroke="#f01414" strokeWidth="2.2" />
          </svg>
        </button>
      </div>
    </div>
  </section>
);

const Workspace = () => {
  const [visible, setVisible] = useState(false);

  return (
    <main className="flex min-w-0 flex-1 flex-col border-t border-r border-l border-[#93a398] bg-[#d9eedb] pl-[2px]">
      <div className="flex h-5 shrink-0">
        <svg viewBox="0 0 18 20" className="h-5 w-[18px] shrink-0" aria-hidden="true">
          <path d="M2 7.5h16M4.5 2v18" stroke="#000" strokeDasharray="2 1" />
          <path d="M5 9l6 5M11 10v4H7" stroke="#e11" fill="none" strokeWidth="1.4" />
        </svg>
        <div className="min-w-0 flex-1"><TopRuler /></div>
      </div>
      <div className="flex min-h-0 flex-1">
        <div className="w-[18px] shrink-0"><LeftRuler /></div>
        <div className="flex min-w-0 flex-1 flex-col">
          <div className="flex min-h-0 flex-1">
            <div className="relative min-w-0 flex-1 bg-white"><Drawing /></div>
            <div className="w-[17px] shrink-0 border-r border-[#a5aea7] bg-[#efefef]">
              <button aria-label="Scroll up" className="flex h-[18px] w-4 items-center justify-center">
                <svg viewBox="0 0 8 4" className="h-1 w-2" aria-hidden="true"><path d="M1 4l3-4 3 4z" /></svg>
              </button>
            </div>
          </div>
          <div className="flex h-[17px] shrink-0 items-stretch bg-[#f6f6f6] text-[12px] leading-[16px]">
            <button className="w-4 border-r border-b border-[#707070] bg-[#f0f0f0] font-bold">+</button>
            <button className="w-4 border-r border-b border-[#707070] bg-[#f0f0f0] font-bold">-</button>
            <button className="ml-[2px] w-14 bg-[#d3d1bf] leading-[18px] whitespace-nowrap">Layer 1</button>
            <div className="w-60 border-b-2 border-l border-[#707070] bg-[#f0f0f0]" />
            <input
              type="checkbox"
              aria-label="Layer visible"
              checked={visible}
              onChange={(e) => setVisible(e.target.checked)}
              className="mt-[2px] h-3 w-3 appearance-none border border-t-[#555] border-r-[#ccc] border-b-[#ccc] border-l-[#555] bg-white checked:bg-[#0a246a]"
            />
            <button aria-label="Scroll layers left" className="ml-1 flex w-[17px] items-center justify-center border-r border-b border-[#707070] bg-[#f0f0f0]">
              <svg viewBox="0 0 4 8" className="h-2 w-1" aria-hidden="true"><path d="M4 0v8L0 4z" /></svg>
            </button>
          </div>
        </div>
      </div>
    </main>
  );
};

function App() {
  return (
    <div className="relative flex h-screen flex-col overflow-hidden bg-[#d9eedb] font-['Noto_Sans',sans-serif] text-black">
      {/* Title bar */}
      <header className="flex h-5 shrink-0 items-center gap-[6px] border-t border-[#4f4f55] bg-linear-to-b from-[#bdcadb] to-[#d3dfed] pr-[2px] pl-1">
        <AppBadge />
        <h1 className="flex-1 text-[13px] leading-4 whitespace-pre text-[#454b54]">Type31 - TypeEdit  - C.P.00123 - version NOT FOR SALE registered to: TYPE3</h1>
        <div className="flex gap-[2px] self-start pt-px">
          <CaptionButton kind="min" label="Minimize" />
          <CaptionButton kind="restore" label="Restore" />
          <CaptionButton kind="close" label="Close" />
        </div>
      </header>
      <div className="absolute top-0 right-[19px] h-[3px] w-[295px] rounded-b-[3px] border-b border-[#1765a4] bg-[#32b4f0]" />

      {/* Menu bar */}
      <nav className="flex h-5 shrink-0 items-center gap-[18px] bg-linear-to-b from-[#cee5d4] to-[#b6dbc1] px-1 text-[12px] text-[#7d857f]">
        {MENUS.map((menu) => (
          <button key={menu}><u>{menu[0]}</u>{menu.slice(1)}</button>
        ))}
        <button className="mr-[10px] ml-auto underline">?</button>
      </nav>

      {/* Toolbar */}
      <div className="flex h-9 shrink-0 items-center border-t border-[#9aa79d] bg-linear-to-b from-[#e0f2df] to-[#a0cfae]">
        <div className="h-full w-[102px] border-r border-[#839287] bg-[#bcdcc4]">
          <svg viewBox="0 0 100 35" className="h-[35px] w-[100px]" role="img" aria-label="typeArt">
            <path d="M83 6c14 1 18 8 9 15-16 12-55 13-83 9 37 2 62-3 73-10 7-5 6-11 1-14z" fill="#0b6835" />
            <text x="9" y="20" className="font-['Liberation_Sans'] text-[19px] font-bold italic" fill="#087018">type</text>
            <text x="50" y="20" className="font-['Liberation_Serif'] text-[20px]" fill="#0b4f2f" stroke="#0b4f2f" strokeWidth="0.5">Art</text>
          </svg>
        </div>
        {TOOLBAR.map((group, index) => (
          <div key={index} className="flex items-center">
            {index > 0 && <span className="mx-[5px] h-[26px] w-[2px] border-r border-white bg-[#84978a]" />}
            {group.map((tool) => (
              <button key={tool.label} aria-label={tool.label} title={tool.label}>{tool.icon}</button>
            ))}
          </div>
        ))}
        <a href="#web" aria-label="Website" className="mr-[17px] ml-auto">
          <Icon>
            <path d="M15 3C6 4 3 10 3 17s4 11 11 12l4-3V5z" fill="#4b656c" />
            <path d="M15 3C6 4 3 10 3 17" stroke="#9fb5b9" strokeWidth="1.4" />
            <ellipse cx="19" cy="15" rx="9" ry="12" fill="#14191c" stroke="#fff" strokeWidth="1.4" />
            <text x="19" y="20" textAnchor="middle" className="font-['Liberation_Sans'] text-[19px] font-bold" fill="#fff">@</text>
          </Icon>
        </a>
      </div>

      {/* Work area */}
      <div className="flex min-h-0 flex-1">
        <aside className="flex w-[70px] shrink-0 flex-col bg-linear-to-b from-[#dcf0dc] to-[#9ecdac]">
          <div className="h-3 shrink-0 border-b border-[#8b998f] bg-[#bcdcc4]" />
          <div className="flex flex-col pt-3 pl-[3px]">
            {SIDE_TOOLS.map((group, index) => (
              <div key={index}>
                {index > 0 && <hr className="mt-1 mr-2 mb-[6px] ml-1 h-[2px] border-0 border-t border-[#75827a] bg-white" />}
                <div className="grid w-16 grid-cols-2">
                  {group.map((tool) => (
                    <SideTool key={tool.label} {...tool} />
                  ))}
                </div>
              </div>
            ))}
          </div>
          <div className="mt-[29px]">
            <button aria-label="typeEdit" className="block"><BrandTab name="edit" /></button>
            <button aria-label="Cam" className="-mt-[9px] block"><BrandTab name="cam" /></button>
          </div>
        </aside>
        <Workspace />
        <InfoPanel />
      </div>

      {/* Status bar */}
      <footer className="flex h-[21px] shrink-0 border-t border-[#929c95] bg-[#f0f0f0] pt-[3px] text-[12px] leading-[17px] whitespace-pre">
        <div className="flex-1 border-r border-[#a0a0a0]">
          <svg viewBox="0 0 30 6" className="mt-[11px] ml-[15px] h-[6px] w-[30px]" aria-hidden="true">
            <circle cx="15" cy="16" r="15" fill="#a8c5dc" stroke="#5c7f9d" />
          </svg>
        </div>
        <span className="ml-5 w-[147px] border-l border-[#a0a0a0] pl-[2px]">TypeArt mode</span>
        <span className="w-[208px] overflow-hidden border-l border-[#a0a0a0] pl-[2px]">X: 170.122   Y: -36.923   Z: 0.000 mm</span>
        <span className="w-[94px] border-l border-[#a0a0a0] pl-px">XY view</span>
        <span className="ml-[2px] w-[97px] border-l border-[#a0a0a0] pl-[5px]">85 % 305 Mo</span>
      </footer>

      {/* Floating windows */}
      <BrushWindow />
      <ShapePalette />
      <SculptWindow />
    </div>
  );
}

export default App;
